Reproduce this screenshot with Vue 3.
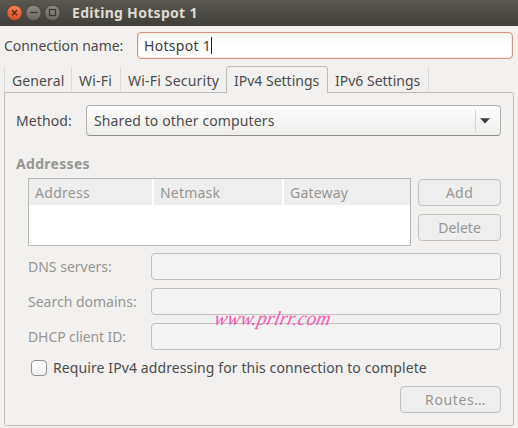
<script setup>
import { ref } from 'vue'

const name = ref('Hotspot 1')
const tabs = [
  { label: 'General', cls: 'general' },
  { label: 'Wi-Fi', cls: 'wifi' },
  { label: 'Wi-Fi Security', cls: 'security' },
  { label: 'IPv4 Settings', cls: 'ipv4' },
  { label: 'IPv6 Settings', cls: 'ipv6' },
]
const active = ref('ipv4')
const fields = [
  { label: 'DNS servers:', cls: 'dns' },
  { label: 'Search domains:', cls: 'search' },
  { label: 'DHCP client ID:', cls: 'dhcp' },
]
</script>

<template>
  <div class="window">
    <header class="titlebar">
      <svg class="controls" width="62" height="26" viewBox="0 0 62 26">
        <defs>
          <linearGradient id="red" x1="0" y1="0" x2="0" y2="1">
            <stop offset="0" stop-color="#f58058" />
            <stop offset="1" stop-color="#df4b26" />
          </linearGradient>
          <linearGradient id="grey" x1="0" y1="0" x2="0" y2="1">
            <stop offset="0" stop-color="#8b8981" />
            <stop offset="1" stop-color="#6c6b64" />
          </linearGradient>
        </defs>
        <circle cx="14.5" cy="12.8" r="7.6" fill="url(#red)" stroke="#38342f" stroke-width=".6" />
        <path d="M12 10.3l5 5M17 10.3l-5 5" stroke="#54241a" stroke-width="1.3" />
        <circle cx="33.5" cy="12.8" r="7.6" fill="url(#grey)" stroke="#3a3934" stroke-width=".6" />
        <path d="M30 12.5h7.5" stroke="#3a3934" stroke-width="1.2" />
        <circle cx="52.5" cy="12.8" r="7.6" fill="url(#grey)" stroke="#3a3934" stroke-width=".6" />
        <rect x="49.5" y="9.5" width="6" height="6" fill="none" stroke="#3a3934" stroke-width="1.2" />
      </svg>
      <span class="title">Editing Hotspot 1</span>
    </header>

    <div class="name-row">
      <span class="name-label">Connection name:</span>
      <div class="entry focus"><span class="value">{{ name }}</span><i class="caret"></i></div>
    </div>

    <nav class="tabs">
      <div v-for="t in tabs" :key="t.cls" class="tab" :class="[t.cls, { active: active === t.cls }]" @click="active = t.cls">
        <span>{{ t.label }}</span>
      </div>
    </nav>

    <main class="panel">
      <div class="method">
        <span class="method-label">Method:</span>
        <div class="combo">
          <span class="combo-text">Shared to other computers</span>
          <div class="combo-arrow">
            <svg width="10" height="6" viewBox="0 0 10 6"><path d="M0 .3h10L5 5.6z" fill="#3c3c3a" /></svg>
          </div>
        </div>
      </div>

      <h2 class="heading">Addresses</h2>

      <div class="addresses">
        <div class="table">
          <div class="thead">
            <div class="th address">Address</div>
            <div class="th netmask">Netmask</div>
            <div class="th gateway">Gateway</div>
          </div>
        </div>
        <div class="buttons">
          <div class="btn add">Add</div>
          <div class="btn delete">Delete</div>
        </div>
      </div>

      <div class="fields">
        <div v-for="f in fields" :key="f.cls" class="field">
          <span class="field-label" :class="f.cls">{{ f.label }}</span>
          <div class="entry disabled"></div>
        </div>
      </div>

      <div class="check-row">
        <i class="check"></i>
        <span class="check-label">Require IPv4 addressing for this connection to complete</span>
      </div>

      <div class="btn routes">Routes…</div>
    </main>

    <svg class="watermark" width="130" height="36" viewBox="0 0 130 36">
      <text x="5" y="22" textLength="116" lengthAdjust="spacingAndGlyphs" transform="translate(5 0) skewX(-12)">www.prlrr.com</text>
    </svg>
  </div>
</template>

<style>
body { background: #f2f1f0; }
</style>

<style scoped>
* { box-sizing: border-box; }
.window {
  position: relative;
  width: 518px;
  height: 428px;
  overflow: hidden;
  background: #f2f1f0;
  color: #4c4c4c;
  font-family: "Noto Sans", "Open Sans", sans-serif;
  font-size: 14px;
  line-height: 20px;
  white-space: nowrap;
}
.titlebar {
  display: flex;
  align-items: center;
  height: 26px;
  background: linear-gradient(#5a5851, #3f3e39);
}
.title {
  margin-left: 10px;
  color: #dfdbd2;
  font-weight: 700;
  letter-spacing: .3px;
}
.name-row {
  display: flex;
  align-items: center;
  height: 27px;
  margin-top: 6px;
  padding-left: 4px;
}
.name-label { width: 133px; letter-spacing: -.04px; }
.entry {
  display: flex;
  align-items: center;
  height: 27px;
  border: 1px solid #c3c1be;
  border-radius: 4px;
}
.focus {
  width: 376px;
  padding-left: 6px;
  border-color: #cf9883;
  background: linear-gradient(#f8f7f6, #fff 60%);
  box-shadow: inset 0 0 0 1px #f8ebe4;
  color: #3c3c3c;
}
.value { letter-spacing: .3px; }
.caret { width: 1px; height: 17px; background: #222; }
.tabs {
  display: flex;
  align-items: flex-end;
  position: relative;
  z-index: 1;
  height: 27px;
  margin: 7px 0 -1px 4px;
}
.tab {
  height: 26px;
  padding: 4px 0 0 7px;
  border-left: 1px solid #dddbd8;
  border-bottom: 1px solid #bfbdba;
}
.general { width: 67px; letter-spacing: .12px; }
.wifi { width: 49px; letter-spacing: .2px; }
.security { width: 106px; letter-spacing: .2px; }
.ipv4 { width: 102px; }
.ipv6 { width: 101px; border-left: 0; border-right: 1px solid #dddbd8; }
.active {
  height: 27px;
  border: 1px solid #bfbdba;
  border-bottom: 0;
  border-radius: 4px 4px 0 0;
  background: #f2f1f0;
}
.panel {
  width: 510px;
  height: 334px;
  margin-left: 4px;
  padding: 12px 12px 0 11px;
  border: 1px solid #bfbdba;
  border-radius: 0 3px 3px 3px;
}
.method { display: flex; align-items: center; height: 31px; }
.method-label { width: 70px; letter-spacing: .12px; }
.combo {
  display: flex;
  align-items: center;
  width: 415px;
  height: 31px;
  padding-left: 7px;
  border: 1px solid #b2b0ad;
  border-bottom-color: #8e8c89;
  border-radius: 4px;
  background: linear-gradient(#fefefe, #eeedec);
}
.combo-text { flex: 1; letter-spacing: .12px; }
.combo-arrow {
  display: flex;
  align-items: center;
  height: 22px;
  width: 25px;
  padding-left: 4px;
  border-left: 1px solid #d4d2cf;
}
.heading {
  height: 20px;
  margin: 18px 0 0;
  color: #979693;
  font-size: 14px;
  font-weight: 700;
  line-height: 20px;
  letter-spacing: .3px;
}
.addresses { display: flex; height: 68px; margin: 4px 0 0 12px; }
.table {
  width: 383px;
  height: 68px;
  border: 1px solid #b9b7b4;
  background: #fff;
}
.thead { display: flex; gap: 2px; height: 26px; }
.th {
  height: 26px;
  padding: 4px 0 0 6px;
  background: #eeeeee;
  color: #979693;
  letter-spacing: .2px;
}
.address { width: 123px; letter-spacing: .3px; }
.netmask { width: 128px; }
.gateway { flex: 1; }
.buttons { display: flex; flex-direction: column; gap: 8px; margin: 1px 0 0 7px; }
.btn {
  display: flex;
  align-items: center;
  justify-content: center;
  width: 83px;
  height: 27px;
  border: 1px solid #c3c1be;
  border-radius: 4px;
  background: #efeeee;
  color: #979693;
}
.fields { display: flex; flex-direction: column; gap: 8px; margin: 7px 0 0 12px; }
.field { display: flex; align-items: center; height: 27px; }
.field-label { width: 123px; color: #979693; }
.dhcp { letter-spacing: -.1px; }
.add { letter-spacing: .5px; }
.disabled { width: 350px; background: #f5f4f4; }
.check-row { display: flex; align-items: center; height: 20px; margin: 8px 0 0 15px; }
.check {
  width: 16px;
  height: 16px;
  border: 1px solid #93918e;
  border-radius: 4px;
  background: linear-gradient(#fff, #f3f2f1);
}
.check-label { margin-left: 6px; letter-spacing: .1px; }
.routes { width: 101px; margin: 8px 0 0 384px; padding-left: 10px; letter-spacing: .6px; }
.watermark { position: absolute; left: 208px; top: 303px; overflow: visible; }
.watermark text {
  fill: #f25cb4;
  font-family: "Liberation Serif", serif;
  font-size: 20px;
  font-style: italic;
}
</style>
